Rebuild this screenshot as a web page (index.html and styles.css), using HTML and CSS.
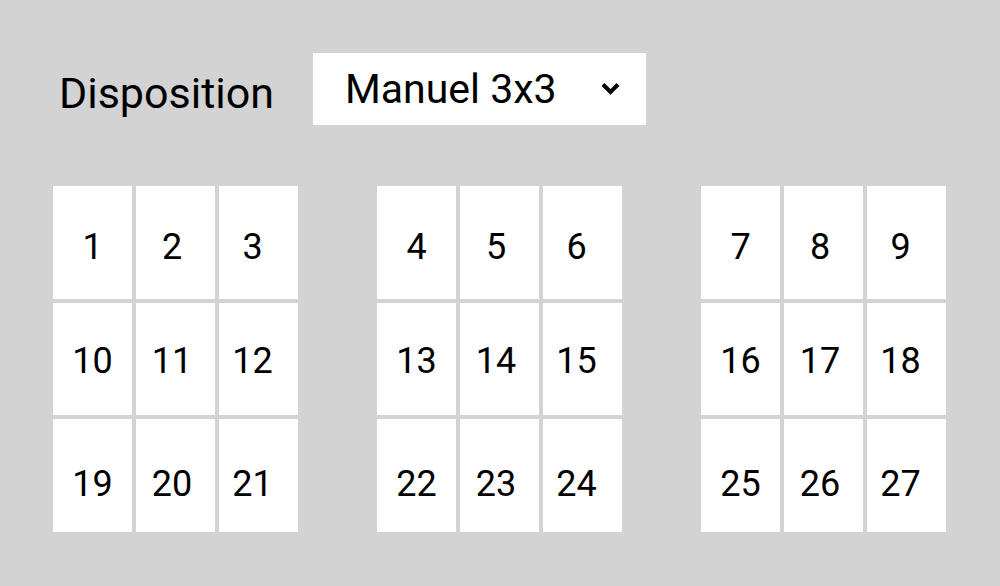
FILE: index.html
```html
<!DOCTYPE html>
<html lang="fr">

<head>
    <meta charset="UTF-8"/>
    <meta name="viewport" content="width=device-width, initial-scale=1.0"/>
    <title>Disposition</title>
    <link rel="stylesheet" href="styles.css">
</head>

<body>
<div class="page">
    <div class="toolbar">
        <span class="toolbar-label">Disposition</span>
        <div class="select">
            <span class="select-value">Manuel 3x3</span>
            <svg class="select-arrow" width="19" height="14" viewBox="0 0 19 14">
                <path d="M2 2.5 L9.5 10 L17 2.5" fill="none" stroke="#000" stroke-width="4"/>
            </svg>
        </div>
    </div>
    <div class="pages">
        <div class="sheet">
            <div class="cell">1</div>
            <div class="cell">2</div>
            <div class="cell">3</div>
            <div class="cell">10</div>
            <div class="cell">11</div>
            <div class="cell">12</div>
            <div class="cell">19</div>
            <div class="cell">20</div>
            <div class="cell">21</div>
        </div>
        <div class="sheet">
            <div class="cell">4</div>
            <div class="cell">5</div>
            <div class="cell">6</div>
            <div class="cell">13</div>
            <div class="cell">14</div>
            <div class="cell">15</div>
            <div class="cell">22</div>
            <div class="cell">23</div>
            <div class="cell">24</div>
        </div>
        <div class="sheet">
            <div class="cell">7</div>
            <div class="cell">8</div>
            <div class="cell">9</div>
            <div class="cell">16</div>
            <div class="cell">17</div>
            <div class="cell">18</div>
            <div class="cell">25</div>
            <div class="cell">26</div>
            <div class="cell">27</div>
        </div>
    </div>
</div>
</body>
</html>
```

FILE: styles.css
```css
* {
    box-sizing: border-box;
}

body {
    margin: 0;
    background: #d3d3d3;
    font-family: Roboto, "Liberation Sans", sans-serif;
    color: #000;
}

.page {
    padding: 53px 54px 0 53px;
}

/* 顶部：标签 + 下拉框 */
.toolbar {
    display: flex;
    align-items: center;
    height: 72px;
}

.toolbar-label {
    font-size: 43px;
    padding-left: 6px;
    padding-top: 7px;
    width: 260px;
}

.select {
    width: 333px;
    height: 72px;
    background: #fff;
    display: flex;
    align-items: center;
    justify-content: space-between;
    padding: 0 26px 0 32px;
}

.select-value {
    font-size: 41px;
}

.select-arrow {
    display: block;
}

/* 三张纸，每张 3x3 */
.pages {
    margin-top: 61px;
    display: flex;
    gap: 79px;
}

.sheet {
    width: 245px;
    height: 346px;
    display: grid;
    grid-template-columns: repeat(3, 1fr);
    grid-template-rows: repeat(3, 1fr);
    gap: 4px;
}

.cell {
    background: #fff;
    display: flex;
    align-items: center;
    justify-content: center;
    font-size: 36px;
    padding-top: 5px;
}

/* 每行数字的位置稍有不同 */
.cell:nth-child(-n+3) {
    padding-top: 10px;
}

.cell:nth-child(n+7) {
    padding-top: 17px;
}

.cell:nth-child(3n+2) {
    padding-right: 7px;
}

.cell:nth-child(3n) {
    padding-right: 12px;
}
```
